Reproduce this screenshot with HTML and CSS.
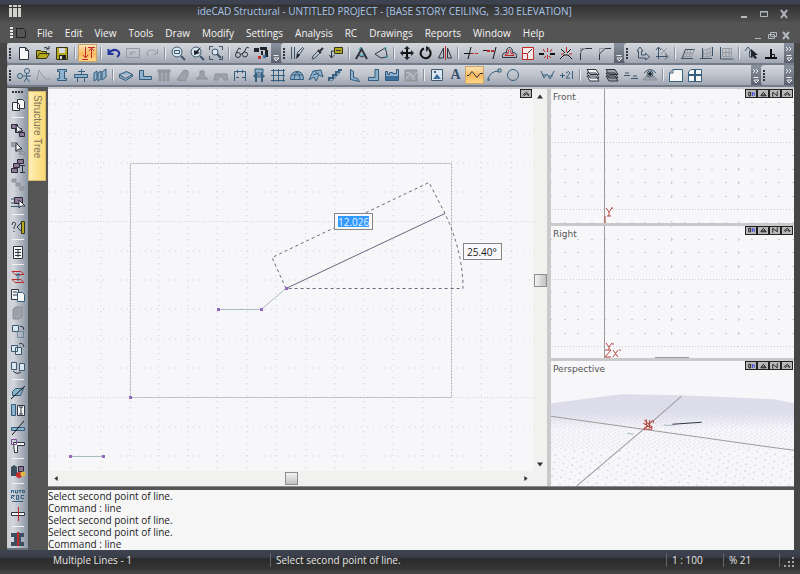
FILE: index.html
```html
<!DOCTYPE html>
<html lang="en">
<head>
    <meta charset="UTF-8">
    <meta name="viewport" content="width=device-width, initial-scale=1.0">
    <title>ideCAD Structural</title>
    <link rel="stylesheet" href="styles.css">
</head>
<body>

    <header class="titlebar">
        <svg class="logo" viewBox="0 0 14 12"><path d="M1 0h3v2H1zM1 3h3v9H1zM5 0h4v2H5zM5 3h4v9H5zM10 0h3v2h-3zM10 3h3v9h-3z"/></svg>
        <h1>ideCAD Structural - UNTITLED PROJECT - [BASE STORY CEILING,&nbsp; 3.30 ELEVATION]</h1>
        <div class="window-buttons">
            <button aria-label="Minimize"><svg viewBox="0 0 10 10"><path d="M2 8h6" stroke-width="2"/></svg></button>
            <button aria-label="Maximize"><svg viewBox="0 0 10 10"><path d="M1.500 2.500h7v5h-7zM1 3h8"/></svg></button>
            <button aria-label="Close"><svg viewBox="0 0 10 10"><path d="M2 1l6 8M8 1L2 9" stroke-width="2"/></svg></button>
        </div>
    </header>

    <nav class="menubar">
        <span class="grip"></span>
        <svg class="doc" viewBox="0 0 12 12"><path d="M1.500 1.500h7l2 2v7h-9z"/></svg>
        <a href="#">File</a>
        <a href="#">Edit</a>
        <a href="#">View</a>
        <a href="#">Tools</a>
        <a href="#">Draw</a>
        <a href="#">Modify</a>
        <a href="#">Settings</a>
        <a href="#">Analysis</a>
        <a href="#">RC</a>
        <a href="#">Drawings</a>
        <a href="#">Reports</a>
        <a href="#">Window</a>
        <a href="#">Help</a>
        <div class="window-buttons small">
            <button aria-label="Minimize drawing"><svg viewBox="0 0 10 10"><path d="M2 8.500h6"/></svg></button>
            <button aria-label="Restore drawing"><svg viewBox="0 0 10 10"><path d="M3.500 2.500h6v4h-6zM1.500 4.500h6v4h-6z"/></svg></button>
            <button aria-label="Close drawing"><svg viewBox="0 0 10 10"><path d="M2 2l6 7M8 2L2 9" stroke-width="2"/></svg></button>
        </div>
    </nav>

    <!-- standard, modify and axis toolbars -->
    <div class="toolrow">
        <div class="toolbar">
            <span class="grip"></span>
            <button aria-label="New"><svg viewBox="0 0 16 16"><path class="white dark" d="M3.500 2.500h6l3 3v9h-9zM9.500 2.500v3h3"/></svg></button>
            <button aria-label="Open"><svg viewBox="0 0 16 16"><path class="olive" d="M1.500 13.500v-8h4l1 1h5v3M1.500 13.500l3-5h10l-3 5z"/><path class="dark" d="M9 3q3-2 4 1M11 4h3V1"/></svg></button>
            <button aria-label="Save"><svg viewBox="0 0 16 16"><path class="olive" d="M2.500 2.500h11v12h-11z"/><path class="fill-light" d="M5 3h6v5H5z"/><path class="fill-dark" d="M5 10h7v4H5z"/><path class="fill-light" d="M6 11h2v3H6z"/></svg></button>
            <i class="sep"></i>
            <button class="active" aria-label="Story up and down"><svg viewBox="0 0 16 16"><path class="red" d="M5.500 2v11M3 10l2.500 3L8 10M2 14.500h6M11.500 4v9M9 6l2.500-3L14 6M8 2.500h7"/></svg></button>
            <i class="sep"></i>
            <button aria-label="Undo"><svg viewBox="0 0 16 16"><path class="navy" d="M3 8q4-5 9-2 3 3-1 6M2.500 4v5h5"/></svg></button>
            <button aria-label="Undo list"><svg viewBox="0 0 16 16"><path class="gray" d="M1.500 3.500h13v9h-13zM5 9q3-4 6-1M5 6v3h3"/></svg></button>
            <button aria-label="Redo"><svg viewBox="0 0 16 16"><path class="gray" d="M13 8Q9 3 4 6q-2 2 0 5M13.500 4v5h-5"/></svg></button>
            <i class="sep"></i>
            <button aria-label="Zoom window"><svg viewBox="0 0 16 16"><circle class="lens" cx="7" cy="7" r="5"/><path class="steel" d="M4.500 5.500h5v3h-5z"/><path class="steel thick" d="M11 11l4 4"/></svg></button>
            <button aria-label="Zoom previous"><svg viewBox="0 0 16 16"><circle class="lens" cx="7" cy="7" r="5"/><path class="fill-dark" d="M5 10V5l2 1 5-4-3 5 2 1z"/><path class="steel thick" d="M11 11l4 4"/></svg></button>
            <button aria-label="Zoom extents"><svg viewBox="0 0 16 16"><path class="steel" d="M1.500 5V1.500H5M11 1.500h3.500V5M14.500 11v3.500H11M5 14.500H1.500V11"/><circle class="lens" cx="7" cy="7" r="3"/><path class="steel thick" d="M9 9l4 4"/></svg></button>
            <i class="sep"></i>
            <button aria-label="View"><svg viewBox="0 0 16 16"><path class="dark" d="M2 8l3-5 2 1M10 7l3-5 2 1M7 9q1-1 2 0"/><circle class="dark" cx="4" cy="10" r="2.500"/><circle class="dark" cx="11" cy="9.500" r="2.500"/></svg></button>
            <button aria-label="Render"><svg viewBox="0 0 16 16"><path class="fill-dark" d="M1 3h5v4H1zM7 2h7v3H7zM8 6h2v4H8zM12 5h3v7h-3z"/><path class="fill-blue" d="M10 10h3v3h-3z"/><path class="fill-red" d="M5 11h3v3H5z"/></svg></button>
            <button class="more" aria-label="More tools"><svg viewBox="0 0 8 18"><path d="M1.500 11.500h5M2 14h5l-3 3z"/></svg></button>
        </div>
        <div class="toolbar">
            <span class="grip"></span>
            <button aria-label="Match properties"><svg viewBox="0 0 16 16"><path class="steel" d="M1.500 2v12M4.500 2v12M7 8l6-6M7 13l7-10"/><path class="fill-dark" d="M7 8l3 2-4 4z"/></svg></button>
            <button aria-label="Eyedropper"><svg viewBox="0 0 16 16"><path class="steel" d="M3 14l1-3 5-5 2 2-5 5z"/><path class="dark thick" d="M9 5l3 3M11 6l3-3"/></svg></button>
            <button aria-label="Label"><svg viewBox="0 0 16 16"><path class="olive" d="M6.500 2.500h8v6h-8z"/><path class="dark" d="M8 5.500h5M6 6H3.500v7M1.500 10l2 3 3-3"/></svg></button>
            <i class="sep"></i>
            <button aria-label="Divide"><svg viewBox="0 0 16 16"><path class="dark thick" d="M2 14l5.500-10L13 14"/><path class="dark" d="M4 10l4 2 4-2"/><path class="cyan" d="M7 2l-2 3M6 10h4"/></svg></button>
            <button aria-label="Measure area"><svg viewBox="0 0 16 16"><path class="dark" d="M2 9l10-6M2 9l6 4 6-1M12 3q2 4 2 9"/><path class="cyan" d="M11 3h3M12 12h3"/></svg></button>
            <i class="sep"></i>
            <button aria-label="Move"><svg viewBox="0 0 16 16"><path class="black thick" d="M8 3v10M3 8h10"/><path class="fill-dark" d="M8 1l3 3H5zM8 15l3-3H5zM1 8l3-3v6zM15 8l-3-3v6z"/></svg></button>
            <button aria-label="Rotate"><svg viewBox="0 0 16 16"><path class="black thick" d="M6 3.500a5 5 0 1 0 5 1"/><path class="fill-dark" d="M8 1v6l4-4z"/></svg></button>
            <button aria-label="Mirror"><svg viewBox="0 0 16 16"><path class="dark" d="M6.500 3v10h-5zM10.500 3v10h4z"/><path class="red" d="M8.500 1v14"/></svg></button>
            <i class="sep"></i>
            <button aria-label="Trim"><svg viewBox="0 0 16 16"><path class="black" d="M1 8.500h7M8 2l-3 12"/><path class="red dashed" d="M8 8.500h8"/></svg></button>
            <button aria-label="Extend"><svg viewBox="0 0 16 16"><path class="black" d="M1 5.500h5M14 2l-3 12"/><path class="red thick dashed" d="M5 6h8"/></svg></button>
            <button aria-label="Offset"><svg viewBox="0 0 16 16"><path class="dark" d="M1.500 12.500q-1-5 4-5 0-5 3-5t3 5q5 0 4 5z"/><path class="red" d="M4 10.500q0-2 3-2 0-4 1.500-4t1.500 4q3 0 3 2z"/></svg></button>
            <button aria-label="Scale"><svg viewBox="0 0 16 16"><path class="redbox" d="M2.500 2.500h11v12h-11z"/><path class="red" d="M2.500 8.500h5v6"/><path class="dark" d="M8 8l4-4"/></svg></button>
            <button aria-label="Break"><svg viewBox="0 0 16 16"><path class="black thick" d="M0 9h5M11 9h5"/><path class="red" d="M8.500 3v4M8.500 10v4M4 4l2 3M13 4l-2 3M5 13l2-2M12 13l-2-2"/></svg></button>
            <button aria-label="Explode"><svg viewBox="0 0 16 16"><path class="black" d="M2 14l4-4 4 0 4 4M3 4l4 4M13 4L9 8"/><path class="red" d="M8.500 2v5M3 9h3M11 9h3"/></svg></button>
            <button aria-label="Fillet"><svg viewBox="0 0 16 16"><path class="dark" d="M3.500 15V9q0-5 5-5.500H15"/><path class="gray" d="M3.500 8V3.500H8"/></svg></button>
            <button aria-label="Chamfer"><svg viewBox="0 0 16 16"><path class="dark" d="M3.500 15V9L9 3.500h6"/><path class="gray" d="M3.500 8V3.500H8"/></svg></button>
            <button class="more" aria-label="More tools"><svg viewBox="0 0 8 18"><path d="M1.500 11.500h5M2 14h5l-3 3z"/></svg></button>
        </div>
        <div class="toolbar last">
            <span class="grip"></span>
            <button aria-label="Global axes"><svg viewBox="0 0 16 16"><path class="steel" d="M2 6l3-4 3 4H6.500v4h4V8l4 4-4 3v-2h-7V6z"/></svg></button>
            <button aria-label="Local axes"><svg viewBox="0 0 16 16"><path class="steel" d="M4.500 14V3M2 5l2.500-3L7 5M2 11.500h11M11 9l3 2.500-3 3"/><path class="gray" d="M7 3l6 6M13 3L7 9"/></svg></button>
            <i class="sep"></i>
            <button aria-label="XY plane"><svg viewBox="0 0 16 16"><path class="gray" d="M5.500 4.500h9l-3 7h-9zM4 8h9M8 4L6 12M11 4L9 12"/><path class="steel" d="M5.500 4.500h9M1 13.500h12M2 14L5.500 4"/></svg></button>
            <button aria-label="YZ plane"><svg viewBox="0 0 16 16"><path class="gray" d="M4.500 5.500l9-3v8l-9 2zM5 9l8-2M8 4v8M11 4v8"/><path class="steel" d="M3.500 3v11M1 13.500h12M13.500 2v9"/></svg></button>
            <button aria-label="XZ plane"><svg viewBox="0 0 16 16"><path class="gray" d="M4.500 3.500h9v8h-9zM5 7.500h8M8 4v8M11 4v8"/><path class="steel" d="M2.500 2v12h13"/></svg></button>
            <i class="sep"></i>
            <button aria-label="Pick axes"><svg viewBox="0 0 16 16"><path class="steel" d="M1 6l3-4 3 4H5.500v6H12"/><path class="fill-dark" d="M7 4v9l2-2 2 3 2-1-2-3h3z"/></svg></button>
            <button aria-label="Perpendicular"><svg viewBox="0 0 16 16"><path class="black thick" d="M2 13h12M8 13V4"/><path class="black" d="M8 9.500h3.500V12"/></svg></button>
            <button class="more" aria-label="More tools"><svg viewBox="0 0 8 18"><path d="M1 3l2 2-2 2M4 3l2 2-2 2M1.500 11.500h5M2 14h5l-3 3z"/></svg></button>
        </div>
    </div>

    <!-- structure elements and drawing toolbars -->
    <div class="toolrow">
        <div class="toolbar wide">
            <span class="grip"></span>
            <button aria-label="Axis"><svg viewBox="0 0 16 16"><circle class="blue" cx="11" cy="4" r="2.500"/><circle class="blue" cx="4" cy="9" r="2.500"/><path class="blue" d="M7 9h8M10.500 7v5M8 15l2.500-4 3 4"/></svg></button>
            <button aria-label="Curve"><svg viewBox="0 0 16 16"><path class="gray" d="M2 13L4 3l4 7q4 3 7 2"/></svg></button>
            <button aria-label="Column"><svg viewBox="0 0 16 16"><path class="bluebox" d="M3.500 2.500h9v2h-2v7h2v2h-9v-2h2v-7h-2z"/></svg></button>
            <button aria-label="Beam"><svg viewBox="0 0 16 16"><path class="bluebox" d="M1.500 7.500h13v3h-13z"/><path class="blue" d="M4.500 11v4M11.500 11v4M8.500 2v5M5 4.500h7"/></svg></button>
            <button aria-label="Wall"><svg viewBox="0 0 16 16"><path class="bluebox" d="M2 6l3-2v8l-3 2zM6 6l3-2v8l-3 2zM10 5l4-3v8l-4 3z"/></svg></button>
            <i class="sep"></i>
            <button aria-label="Slab"><svg viewBox="0 0 16 16"><path class="bluebox" d="M1.500 7.500l7-3 6 3-7 4zM1.500 7.500v3l6 3 7-4v-2"/></svg></button>
            <button aria-label="Foundation"><svg viewBox="0 0 16 16"><path class="bluebox" d="M2.500 3.500h4v6h8v3h-12z"/></svg></button>
            <button aria-label="Piles"><svg viewBox="0 0 16 16"><path class="graybox" d="M2 3h12v2H2zM3 5h2v9H3zM7 5h2v9H7zM11 5h2v9h-2z"/></svg></button>
            <button aria-label="Raft"><svg viewBox="0 0 16 16"><path class="graybox" d="M2 13l4-6 3-4 4 1v4l-3 6z"/></svg></button>
            <button aria-label="Footing"><svg viewBox="0 0 16 16"><path class="graybox" d="M6 4h4v5l4 3H2l4-3z"/></svg></button>
            <button aria-label="Strip footing"><svg viewBox="0 0 16 16"><path class="graybox" d="M2 7h12v3l1 3h-4l-1-3H6l-1 3H1l1-3z"/></svg></button>
            <button aria-label="Frame"><svg viewBox="0 0 16 16"><path class="blue" d="M2.500 14V4.500h11V14M5.500 3v3M10.500 3v3M4 10.500h3M10 10.500h3"/></svg></button>
            <button aria-label="Stool"><svg viewBox="0 0 16 16"><path class="bluebox" d="M4 2h8v4H4zM3 8h10v2H3z"/><path class="blue thick" d="M5 6v9M11 6v9"/></svg></button>
            <button aria-label="Grid"><svg viewBox="0 0 16 16"><path class="blue" d="M3.500 2v13M8.500 2v13M13.500 2v13M1 3.500h14M1 8.500h14M1 13.500h14"/></svg></button>
            <button aria-label="Dome"><svg viewBox="0 0 16 16"><path class="bluebox" d="M1.500 12.500q0-8 6.500-8t6.500 8zM5 12q0-5 3-7 3 2 3 7M3 8h10"/></svg></button>
            <button aria-label="Roof"><svg viewBox="0 0 16 16"><path class="bluebox" d="M1 13l4-9 8-1 2 7-4-2-3 6-2-4z"/><path class="blue" d="M7 4l4 5M5 8l6-2"/></svg></button>
            <button aria-label="Stairs"><svg viewBox="0 0 16 16"><path class="blue thick" d="M2 14V11h4V8h3V5h3V3h3"/><path class="blue" d="M4 14.500l9-9"/></svg></button>
            <button aria-label="Panel"><svg viewBox="0 0 16 16"><path class="bluebox" d="M4.500 2.500l3 2v6l4 1 2 3-9-2z"/></svg></button>
            <button aria-label="Section"><svg viewBox="0 0 16 16"><path class="bluebox" d="M10 2.500h3.500v11h-10v-3H10z"/></svg></button>
            <button aria-label="Elevation"><svg viewBox="0 0 16 16"><path class="bluebox" d="M1.500 4.500v9h13v-11h-2v4h-4v-1h-3v2h-2v-3z"/><path class="fill-blue" d="M2 9h12v4H2z"/></svg></button>
            <button aria-label="Terrain"><svg viewBox="0 0 16 16"><path class="graybox" d="M2 3h12v11H2z"/><path class="pale" d="M3 12l4-5 3 3 4-5M3 6q4-3 8 7"/></svg></button>
            <i class="sep"></i>
            <button aria-label="Picture"><svg viewBox="0 0 16 16"><path class="lens" d="M2.500 2.500h11v11h-11z"/><path class="fill-blue" d="M4 12l4-5 4 5z"/><circle class="fill-dark" cx="6" cy="5" r="1"/></svg></button>
            <button class="letter" aria-label="Text">A</button>
            <button class="active" aria-label="Multiple lines"><svg viewBox="0 0 16 16"><path class="dark" d="M0 8.500h2l3-4 5 6 3-4h3"/></svg></button>
            <button aria-label="Arc"><svg viewBox="0 0 16 16"><path class="blue" d="M2 14Q3 4 13 4M12 2h3v3h-3zM1 12h2v2"/></svg></button>
            <button aria-label="Circle"><svg viewBox="0 0 16 16"><circle class="blue" cx="8" cy="8" r="5.500"/></svg></button>
            <i class="space"></i>
            <button aria-label="Polyline dimension"><svg viewBox="0 0 16 16"><path class="blue" d="M1 4l3 7 3-4 3 5 4-8M3 8h3M9 9h4"/></svg></button>
            <button aria-label="Level"><svg viewBox="0 0 16 16"><path class="blue" d="M1 8.500h5M3.500 6v5M7 6q3-3 4 0l-4 5h4M13.500 4v8"/></svg></button>
            <i class="sep"></i>
            <button aria-label="Layers"><svg viewBox="0 0 16 16"><path class="white dark" d="M2 9l3 5h9l-3-5zM2 6l3 5h9l-3-5zM2 2.500l3 5h9l-3-5z"/></svg></button>
            <button aria-label="Layer list"><svg viewBox="0 0 16 16"><path class="graybox dark" d="M2 9l3 5h9l-3-5zM2 6l3 5h9l-3-5zM2 2.500l3 5h9l-3-5z"/></svg></button>
            <button aria-label="Layer state"><svg viewBox="0 0 16 16"><path class="steel" d="M1 8.500h6M2 6h4M8 11.500h7M10 9h4"/></svg></button>
            <button aria-label="Layer visibility"><svg viewBox="0 0 16 16"><path class="steel" d="M2 6q6-7 12 0"/><path class="graybox" d="M1 13l3-4h8l3 4z"/><circle class="lens" cx="8" cy="7" r="3"/><circle class="fill-dark" cx="8" cy="7" r="2"/></svg></button>
            <i class="sep"></i>
            <button aria-label="Single view"><svg viewBox="0 0 16 16"><path class="white blue" d="M5 2.500h9.500v12h-13V6zM5 2.500V6H1.500"/></svg></button>
            <button aria-label="Split views"><svg viewBox="0 0 16 16"><path class="white blue" d="M4 2.500h10.500v12h-13V5z"/><path class="blue thick" d="M8 3v11M2 8h12"/></svg></button>
            <button class="more push" aria-label="More tools"><svg viewBox="0 0 8 18"><path d="M1 3l2 2-2 2M4 3l2 2-2 2M1.500 11.500h5M2 14h5l-3 3z"/></svg></button>
        </div>
        <div class="toolbar tail">
            <span class="grip"></span>
            <button class="more push" aria-label="More tools"><svg viewBox="0 0 8 18"><path d="M1 3l2 2-2 2M4 3l2 2-2 2M1.500 11.500h5M2 14h5l-3 3z"/></svg></button>
        </div>
    </div>

    <main class="workspace">
        <div class="sidebar">
            <span class="grip flat"></span>
            <button aria-label="Copy"><svg viewBox="0 0 16 16"><path class="white dark" d="M7.500 2.500h5l2 2v7h-7zM2.500 5.500h5l2 2v6h-7z"/></svg></button>
            <i class="sep"></i>
            <button aria-label="Select"><svg viewBox="0 0 16 16"><path class="mauve" d="M1.500 2.500h6v4h-6zM5.500 6.500h6v4h-6zM9.500 10.500h5v4h-5z"/><path class="white dark" d="M6 3l7 6-4 0-2 2z"/></svg></button>
            <button aria-label="Deselect"><svg viewBox="0 0 16 16"><path class="graybox" d="M1.500 2.500h6v4h-6zM5.500 7.500h6v4h-6zM9.500 11.500h5v3h-5z"/><path class="white dark" d="M6 3l6 6-3 0-3 2z"/></svg></button>
            <button aria-label="Select by level"><svg viewBox="0 0 16 16"><path class="mauve" d="M7.500 1.500h6v4h-6zM3.500 5.500h6v4h-6zM1.500 10.500h6v4h-6z"/><path class="dark" d="M12.500 7v8M10 7.500h5M10 14.500h5"/></svg></button>
            <button aria-label="Clear selection"><svg viewBox="0 0 16 16"><path class="graybox" d="M2 3h4v3H2zM6 7h4v3H6zM10 11h4v3h-4z"/></svg></button>
            <button aria-label="Pick object"><svg viewBox="0 0 16 16"><path class="mauve" d="M4.500 3.500h8v6h-8z"/><path class="steel" d="M1 5h3M1 9h3M1 12.500h9"/><path class="white dark" d="M9 6v8l2-2h4z"/></svg></button>
            <i class="sep"></i>
            <button aria-label="Help measure"><svg viewBox="0 0 16 16"><path class="dark" d="M2 6q0-3 2-3 3 1 0 5v2M4 12v1M12 3L7 8l5 5"/><path class="olive" d="M11.500 2.500h3v12h-3z"/></svg></button>
            <i class="sep"></i>
            <button aria-label="Properties"><svg viewBox="0 0 16 16"><path class="white dark" d="M3.500 2.500h9v12h-9z"/><path class="dark" d="M5 5.500h6M5 8.500h6M5 11.500h6M8 5v8"/></svg></button>
            <i class="sep"></i>
            <button aria-label="Story height"><svg viewBox="0 0 16 16"><path class="red" d="M2 2.500h9l3 3H5zM2 10.500h9l3 3H5z"/><path class="blue" d="M8 4v8M6 7l2-2 2 2"/></svg></button>
            <button aria-label="Copy story"><svg viewBox="0 0 16 16"><path class="white dark" d="M1.500 2.500h7v10h-7zM3 5h4M3 8h4"/><path class="white blue" d="M7.500 5.500h5l2 2v7h-7z"/></svg></button>
            <button aria-label="Paste story"><svg viewBox="0 0 16 16"><path class="graybox" d="M3 4l3-2h6v10l-3 2H3z"/></svg></button>
            <button aria-label="Rotate copy"><svg viewBox="0 0 16 16"><path class="lens" d="M2.500 2.500h6v6h-6z"/><path class="blue dotted" d="M7.500 8.500h6v6h-6z"/><path class="dark" d="M10 3q4 0 4 4"/></svg></button>
            <button aria-label="Array copy"><svg viewBox="0 0 16 16"><path class="lens" d="M1.500 4.500h6v6h-6zM5.500 6.500h6v7h-6z"/><path class="dark" d="M9 3q4-2 5 3"/></svg></button>
            <button aria-label="Mirror copy"><svg viewBox="0 0 16 16"><path class="lens" d="M1.500 3.500h5v7h-5zM9.500 4.500h5v7h-5z"/><path class="dark" d="M3 12q4 4 8 1"/></svg></button>
            <i class="sep"></i>
            <button aria-label="Cut plane"><svg viewBox="0 0 16 16"><path class="bluebox" d="M2.500 7.500l3-3h8l-3 7h-8z"/><path class="black" d="M1 15L15 2"/></svg></button>
            <button aria-label="Beam section"><svg viewBox="0 0 16 16"><path class="bluebox" d="M1.500 2.500h4v11h-4z"/><path class="white dark" d="M7.500 3.500h7v10h-7z"/><path class="dark" d="M9 5h4M9 12h4M11 5v7"/></svg></button>
            <button aria-label="Slope"><svg viewBox="0 0 16 16"><path class="bluebox" d="M1.500 7.500h13v3h-13z"/><path class="black" d="M2 15L14 1"/></svg></button>
            <button aria-label="Corner"><svg viewBox="0 0 16 16"><path class="white dark" d="M3.500 4.500h11v3h-7v7h-3z"/><path class="purple" d="M1.500 1.500h5v5h-5z"/></svg></button>
            <i class="sep"></i>
            <button aria-label="Materials"><svg viewBox="0 0 16 16"><path class="fill-slate" d="M1 4l3-2 3 2v9H1z"/><path class="mauve" d="M8.500 3.500h5v5h-5z"/><circle class="fill-red" cx="9" cy="12" r="3"/><circle class="fill-gold" cx="13" cy="11" r="2.500"/></svg></button>
            <i class="sep"></i>
            <button aria-label="Auto R and C"><svg viewBox="0 0 16 16"><path class="blue" d="M1.500 5V2.500h2V5M5.500 2v3h2V2M8.500 2.500h3M10 2v3M12.500 2.500h2v2h-2zM1.500 11V7.500h3l-2 2 2 2M6.500 7.500h2v4h-2zM14 7.500h-3v3h3M2 13.500h11"/></svg></button>
            <button aria-label="Split beam"><svg viewBox="0 0 16 16"><path class="white dark" d="M1.500 6.500h13v3h-13z"/><path class="red" d="M8.500 1v14"/></svg></button>
            <i class="sep"></i>
            <button aria-label="Split column"><svg viewBox="0 0 16 16"><path class="fill-slate" d="M1 2h13v4h-3v5h3v4H1v-4h3V6H1z"/><path class="red thick" d="M8 1v14"/></svg></button>
            <button class="expand" aria-label="Expand toolbar"><svg viewBox="0 0 16 10"><path d="M3.500 3v1M3.500 6v1M10 2v6l4-3z"/></svg></button>
        </div>

        <aside class="tabs">
            <button class="tab">Structure Tree</button>
        </aside>

        <div class="content">
            <div class="views">
                <section class="plan">
                    <div class="sheet">
                        <svg class="drawing">
                            <!-- reference grid, 1 m -->
                            <path class="grid" d="M22 0V382M52 0V382M81 0V382M110 0V382M139 0V382M168 0V382M198 0V382M227 0V382M257 0V382M286 0V382M315 0V382M344 0V382M374 0V382M403 0V382M432 0V382M462 0V382"/>
                            <path class="grid" d="M0 15H484M0 45H484M0 74H484M0 103H484M0 162H484M0 191H484M0 220H484M0 250H484M0 279H484M0 338H484M0 367H484"/>
                            <path class="grid major" d="M0 132.500H484M0 308.500H484"/>
                            <path class="outline" d="M81.500 74.500h321v234h-321z"/>
                            <path class="segment" d="M22 367.500h32M169 220.500h43l25-21"/>
                            <path class="line" d="M237 199.500L396 124.500"/>
                            <path class="guide" d="M237 199.500L223 168.500L380 93.500L396 124.500Q414 163 414 199.500H237"/>
                            <path class="node" d="M20 366h3v3h-3zM53 366h3v3h-3zM80 307h3v3h-3zM168 219h3v3h-3zM211 219h3v3h-3zM236 198h3v3h-3z"/>
                        </svg>
                        <input class="value length" aria-label="Length" value="12.026">
                        <input class="value angle" aria-label="Angle" value="25.40°">
                        <div class="view-buttons">
                            <button aria-label="Maximize view"><svg viewBox="0 0 11 8"><path d="M2 5l4-3 3 3M3 6l3-2 3 2"/></svg></button>
                        </div>
                    </div>
                    <div class="scroll vertical">
                        <button aria-label="Scroll up"><svg viewBox="0 0 6 4"><path d="M0 4l3-4 3 4z"/></svg></button>
                        <span class="thumb"></span>
                        <button aria-label="Scroll down"><svg viewBox="0 0 6 4"><path d="M0 0l3 4 3-4z"/></svg></button>
                    </div>
                    <div class="scroll horizontal">
                        <button aria-label="Scroll left"><svg viewBox="0 0 4 6"><path d="M4 0L0 3l4 3z"/></svg></button>
                        <span class="thumb"></span>
                        <button aria-label="Scroll right"><svg viewBox="0 0 4 6"><path d="M0 0l4 3-4 3z"/></svg></button>
                    </div>
                </section>

                <div class="side-views">
                    <section class="view">
                        <svg class="drawing">
                            <defs>
                                <pattern id="minor-grid" x="53" y="53" width="67" height="67" patternUnits="userSpaceOnUse">
                                    <path class="ticks" d="M0 13.500h67M0 27.500h67M0 40.500h67M0 54.500h67"/>
                                    <path class="dots" d="M0 .5h67"/>
                                    <path class="ticks heavy" d="M.5 12v3M.5 26v3M.5 39v3M.5 53v3"/>
                                </pattern>
                            </defs>
                            <rect width="100%" height="100%" fill="url(#minor-grid)"/>
                            <path class="axis" d="M53.500 0V134"/>
                            <path class="ucs" d="M54 134v-7M55 119l3 4 3-4M58 123v4M56 127h4M61 118v2"/>
                        </svg>
                        <h2>Front</h2>
                        <div class="view-buttons">
                            <button aria-label="View mode"><svg viewBox="0 0 11 8"><path d="M3 2h2v4H3z"/><path class="mark" d="M7 2v4M9 2v4"/></svg></button>
                            <button aria-label="Axes"><svg viewBox="0 0 11 8"><path d="M3 6l3-4 3 4zM4 5h4"/></svg></button>
                            <button aria-label="Normal"><svg viewBox="0 0 11 8"><path d="M3 7V2l5 4V1"/></svg></button>
                            <button aria-label="Maximize view"><svg viewBox="0 0 11 8"><path d="M2 5l4-3 3 3M3 6l3-2 3 2"/></svg></button>
                        </div>
                    </section>
                    <section class="view">
                        <svg class="drawing">
                            <rect width="100%" height="100%" fill="url(#minor-grid)"/>
                            <path class="axis" d="M53.500 0V132M104 131.500h34"/>
                            <path class="ucs" d="M55 117l3 4 3-4M58 121v3M62 117v2M54 124h6l-6 7h6M62 124l5 7M67 124l-5 7M69 123v2"/>
                        </svg>
                        <h2>Right</h2>
                        <div class="view-buttons">
                            <button aria-label="View mode"><svg viewBox="0 0 11 8"><path d="M3 2h2v4H3z"/><path class="mark" d="M7 2v4M9 2v4"/></svg></button>
                            <button aria-label="Axes"><svg viewBox="0 0 11 8"><path d="M3 6l3-4 3 4zM4 5h4"/></svg></button>
                            <button aria-label="Normal"><svg viewBox="0 0 11 8"><path d="M3 7V2l5 4V1"/></svg></button>
                            <button aria-label="Maximize view"><svg viewBox="0 0 11 8"><path d="M2 5l4-3 3 3M3 6l3-2 3 2"/></svg></button>
                        </div>
                    </section>
                    <section class="view">
                        <svg class="drawing" viewBox="0 0 242 125" preserveAspectRatio="xMinYMin slice">
                            <defs>
                                <linearGradient id="haze" x1="0" y1="0" x2="0" y2="1">
                                    <stop offset="0" stop-color="#dddceb"/>
                                    <stop offset="0.500" stop-color="#dddceb"/>
                                    <stop offset="1" stop-color="#f7f7fa"/>
                                </linearGradient>
                                <pattern id="near-floor" width="9" height="7" patternUnits="userSpaceOnUse" patternTransform="rotate(9)"><path class="floor" d="M0 1h2M5 4h1"/></pattern>
                                <pattern id="mid-floor" width="5" height="4" patternUnits="userSpaceOnUse" patternTransform="rotate(7)"><path class="floor" d="M0 1h1M2 3h1"/></pattern>
                            </defs>
                            <path fill="url(#haze)" d="M0 42L70 33 130 34 222 38 242 42V68H0z"/>
                            <path fill="url(#mid-floor)" d="M0 54H242V88H0z"/>
                            <path fill="url(#near-floor)" d="M0 88H242V125H0z"/>
                            <path class="axis" d="M0 55L92 68 242 89M25 125L92 68 130 35"/>
                            <path class="segment" d="M76 72l6 1M112 64h10"/>
                            <path class="dark" d="M121 63l29-2"/>
                            <path class="ucs" d="M93 59l8 7M101 59l-9 9M92 62l9 5M95 58v9M98 59v8M102 59v3M92 68h9"/>
                        </svg>
                        <h2>Perspective</h2>
                        <div class="view-buttons">
                            <button aria-label="View mode"><svg viewBox="0 0 11 8"><path d="M3 2h2v4H3z"/><path class="mark" d="M7 2v4M9 2v4"/></svg></button>
                            <button aria-label="Axes"><svg viewBox="0 0 11 8"><path d="M3 6l3-4 3 4zM4 5h4"/></svg></button>
                            <button aria-label="Normal"><svg viewBox="0 0 11 8"><path d="M3 7V2l5 4V1"/></svg></button>
                            <button aria-label="Maximize view"><svg viewBox="0 0 11 8"><path d="M2 5l4-3 3 3M3 6l3-2 3 2"/></svg></button>
                        </div>
                    </section>
                </div>
            </div>

            <div class="console">
                <p>Select second point of line.</p>
                <p>Command : line</p>
                <p>Select second point of line.</p>
                <p>Select second point of line.</p>
                <p>Command : line</p>
            </div>
        </div>
    </main>

    <footer class="statusbar">
        <span class="mode">Multiple Lines - 1</span>
        <span class="prompt">Select second point of line.</span>
        <span class="ratio">1 : 100</span>
        <span class="percent">% 21</span>
        <span class="resize"><svg viewBox="0 0 10 10"><path d="M8 0h2v2H8zM4 4h2v2H4zM8 4h2v2H8zM0 8h2v2H0zM4 8h2v2H4zM8 8h2v2H8z"/></svg></span>
    </footer>

</body>
</html>
```

FILE: styles.css
```css
* {
    box-sizing: border-box;
}

body {
    font-family: "Open Sans", "Noto Sans", sans-serif;
    font-size: 10px;
    margin: 0;
    height: 100vh;
    display: flex;
    flex-direction: column;
    background-color: #454545;
    color: #1c1c1c;
    overflow: hidden;
}

button {
    display: flex;
    align-items: center;
    justify-content: center;
    margin: 0;
    padding: 0;
    border: 0;
    background: none;
    font-family: inherit;
    flex: none;
}

p, h1, h2 {
    margin: 0;
    font-weight: normal;
}

/* Title and menu */
.titlebar {
    display: flex;
    align-items: center;
    height: 22px;
    padding: 0 11px 0 8px;
    background: linear-gradient(#3d4250, #3d4250 4px, #323232 5px, #4f4f4f);
}

.logo {
    width: 14px;
    height: 12px;
    fill: #d2d2cc;
}

.titlebar h1 {
    flex: 1;
    padding-left: 8px;
    text-align: center;
    font-size: 10px;
    line-height: 20px;
    color: #a6c5ec;
}

.window-buttons {
    display: flex;
    gap: 10px;
    padding-top: 6px;
}

.window-buttons svg {
    display: block;
    width: 10px;
    height: 10px;
    fill: none;
    stroke: #b4b9c2;
}

.window-buttons.small {
    gap: 4px;
    margin-left: auto;
    padding-top: 4px;
}

.menubar {
    display: flex;
    align-items: center;
    height: 21px;
    padding: 0 9px 0 8px;
    background-color: #545454;
}

.menubar .doc {
    width: 12px;
    height: 12px;
    margin-right: 4px;
    fill: none;
    stroke: #222;
}

.menubar a {
    padding: 0 6px;
    color: #f4f4f4;
    text-decoration: none;
}

.grip {
    flex: none;
    width: 3px;
    height: 11px;
    margin: 0 2px;
    background: repeating-linear-gradient(#e6e6e6 0 2px, transparent 2px 3px);
}

/* Toolbars */
.toolrow {
    display: flex;
    height: 22px;
    margin: 0 6px 0 7px;
    background-color: #747c8a;
}

.toolbar {
    display: flex;
    align-items: center;
    height: 20px;
    background: linear-gradient(#d3d6dc, #bfc3cb 50%, #9fa6b2);
    border-radius: 3px 0 0 3px;
}

.toolbar .grip {
    width: 2px;
    margin: 0 3px 0 2px;
    background: repeating-linear-gradient(#30343c 0 2px, transparent 2px 3px);
}

.toolbar button {
    width: 19px;
    height: 20px;
}

.toolbar button svg,
.sidebar button svg {
    display: block;
    width: 16px;
    height: 16px;
    fill: none;
}

.toolbar button.active {
    height: 18px;
    background: linear-gradient(#fde3b4, #fbb95c 55%, #fdd78a);
    border: 1px solid #c9a368;
}

.toolbar button.letter {
    font-family: "Liberation Serif", serif;
    font-size: 14px;
    font-weight: bold;
    color: #35506c;
}

.toolbar button.more {
    width: 10px;
    height: 20px;
    margin-left: 1px;
    background: linear-gradient(#8c93a0, #596170);
}

.toolbar button.more svg {
    width: 8px;
    height: 18px;
    stroke: #f0f0f0;
}

.toolbar button.push {
    margin-left: auto;
}

.toolbar.last,
.toolbar.tail {
    flex: 1;
}

.toolbar.last .more {
    margin-left: auto;
}

.toolbar.last .grip {
    margin-right: 5px;
}

.toolbar.wide {
    flex: 1;
}

.toolbar.tail {
    flex: none;
    width: 33px;
}

.sep {
    flex: none;
    width: 7px;
    height: 12px;
    background: linear-gradient(90deg, transparent 3px, #8a909c 3px, #8a909c 4px, #eceef1 4px, #eceef1 5px, transparent 5px);
}

.space {
    width: 16px;
}

/* Icon strokes and fills */
.black { stroke: #101010; }
.dark { stroke: #2c3440; }
.steel { stroke: #3f5468; }
.blue { stroke: #35607f; }
.gray { stroke: #969aa2; }
.pale { stroke: #c4c7cc; }
.red { stroke: #bf2a2a; }
.navy { stroke: #20349a; stroke-width: 2; }
.cyan { stroke: #25a5b5; }
.white { fill: #f8f8f8; }
.olive { fill: #b5a91c; stroke: #35341a; }
.lens { fill: #d9e7f2; stroke: #40586e; }
.bluebox { fill: #8db2cd; stroke: #335a78; }
.graybox { fill: #9da1a9; stroke: #8b9098; }
.graybox.dark { stroke: #2c3440; }
.redbox { fill: #f5e8e8; stroke: #bf2a2a; }
.mauve { fill: #8d7896; stroke: #2e2838; }
.purple { stroke: #7d4e9c; }
.fill-dark { fill: #1e242c; }
.fill-light { fill: #d8dade; }
.fill-blue { fill: #3b6f9c; }
.fill-red { fill: #c32f2a; }
.fill-gold { fill: #e0b83c; }
.fill-slate { fill: #3c4f60; }
.thick { stroke-width: 2; }
.dashed { stroke-dasharray: 3 1; }
.dotted { stroke-dasharray: 1 1; }

/* Workspace */
.workspace {
    flex: 1;
    display: flex;
    min-height: 0;
    margin: 0 6px 0 7px;
    background-color: #555;
}

.sidebar {
    flex: none;
    display: flex;
    flex-direction: column;
    align-items: center;
    width: 21px;
    margin-top: 1px;
    background: linear-gradient(90deg, #c9cdd4, #d3d6dc 30%, #8994a3);
}

.sidebar .grip {
    width: 12px;
    height: 2px;
    margin: 3px 0;
    background: repeating-linear-gradient(90deg, #30343c 0 2px, transparent 2px 3px);
}

.sidebar button {
    width: 20px;
    height: 18px;
}

.sidebar .sep {
    width: 12px;
    height: 7px;
    background: linear-gradient(transparent 3px, #f0f1f3 3px, #f0f1f3 4px, transparent 4px);
}

.sidebar .expand {
    flex: 1;
    width: 21px;
    padding-top: 4px;
    background: #6b7380;
}

.sidebar .expand svg {
    height: 10px;
    stroke: #e8e8e8;
}

.tabs {
    flex: none;
    width: 20px;
    padding-top: 4px;
}

.tab {
    width: 18px;
    height: 90px;
    padding-top: 3px;
    justify-content: flex-start;
    writing-mode: vertical-rl;
    background: linear-gradient(90deg, #fff0b8, #fbd873);
    border: 1px solid #d9bd6c;
    font-family: "Liberation Sans", sans-serif;
    font-size: 10px;
    color: #7d725c;
}

.content {
    flex: 1;
    display: flex;
    flex-direction: column;
    gap: 3px;
    min-width: 0;
}

.views {
    flex: 1;
    display: flex;
    gap: 4px;
    min-height: 0;
    padding-top: 2px;
    border-bottom: 1px solid #8b8b8b;
    background-color: #cacacc;
}

.plan {
    flex: 498;
    display: grid;
    grid-template-columns: 1fr 14px;
    grid-template-rows: 1fr 15px;
    min-width: 0;
    padding-left: 1px;
    background-color: #f1f1f2;
}

.sheet,
.view {
    position: relative;
    overflow: hidden;
    background-color: #f7f7fa;
}

.drawing {
    display: block;
    width: 100%;
    height: 100%;
    fill: none;
}

.grid {
    stroke: #cfcfdb;
    stroke-dasharray: 1 5;
}

.grid.major {
    stroke-dasharray: 1 2;
}

.outline {
    stroke: #b2b2b6;
    stroke-dasharray: 2 1;
}

.segment {
    stroke: #a7bdc0;
}

.line {
    stroke: #62697f;
}

.guide {
    stroke: #62697f;
    stroke-dasharray: 3 3;
}

.node {
    fill: #9468bd;
}

.ticks {
    stroke: #cdccdc;
    stroke-dasharray: 2 11 2 12 2 11 2 12 2 11;
}

.ticks.heavy {
    stroke-dasharray: none;
}

.dots {
    stroke: #cdccdc;
    stroke-dasharray: 1 2;
}

.axis {
    stroke: #9c9c9c;
}

.ucs {
    stroke: #b8453c;
}

.floor {
    stroke: #cfcee2;
}

.value {
    position: absolute;
    width: 39px;
    height: 17px;
    padding: 2px 3px;
    border: 1px solid #858585;
    font-family: inherit;
    font-size: 10px;
    line-height: 11px;
    color: #1c1c1c;
    background: #f8f8fa;
}

.value.length {
    left: 285px;
    top: 124px;
    color: #e4f1ff;
    background: linear-gradient(#3399ff, #3399ff) content-box, #f8f8fa;
}

.value.angle {
    left: 414px;
    top: 154px;
}

.view-buttons {
    position: absolute;
    top: 0;
    right: 1px;
    display: flex;
}

.view-buttons button {
    width: 12px;
    height: 9px;
    background-color: #b9b9b9;
    border: 1px solid #222;
}

.view-buttons svg {
    width: 11px;
    height: 8px;
    fill: none;
    stroke: #1c1c1c;
}

.view-buttons .mark {
    stroke: #2430e0;
}

.scroll {
    display: flex;
    align-items: center;
    justify-content: space-between;
    background-color: #f1f1f0;
}

.scroll.vertical {
    flex-direction: column;
}

.scroll button {
    width: 14px;
    height: 14px;
}

.scroll svg {
    width: 6px;
    height: 5px;
    fill: #333;
}

.thumb {
    width: 13px;
    height: 13px;
    border: 1px solid #8e8e8e;
    background: linear-gradient(#f2f2f2, #c2c2c4);
}

.vertical .thumb {
    background: linear-gradient(90deg, #f2f2f2, #c2c2c4);
}

.side-views {
    flex: 243;
    display: grid;
    grid-template-rows: 134fr 133fr 125fr;
    gap: 3px;
    min-width: 0;
}

.view h2 {
    position: absolute;
    left: 2px;
    top: 2px;
    font-family: "DejaVu Sans", sans-serif;
    font-size: 9px;
    line-height: 12px;
    color: #555;
}

.console {
    height: 60px;
    background-color: #f6f6f7;
}

.console p {
    line-height: 12px;
}

/* Status bar */
.statusbar {
    display: flex;
    align-items: center;
    height: 24px;
    padding: 0 6px 4px 48px;
    background: linear-gradient(#3e4350, #3a3e49 7px, #2b2b2b 9px, #363636 20px, #444 21px);
    color: #e6e6e6;
}

.statusbar span {
    padding-left: 5px;
    line-height: 14px;
    border-left: 1px solid #666;
}

.statusbar .mode {
    flex: 217;
    border-left: 0;
}

.statusbar .prompt {
    flex: 390;
}

.statusbar .ratio {
    flex: 51;
}

.statusbar .percent {
    flex: 50;
}

.statusbar .resize {
    flex: none;
    width: 15px;
    height: 14px;
    padding: 4px 0 0 4px;
}

.resize svg {
    display: block;
    width: 10px;
    height: 10px;
    fill: #a5a5a5;
}
```
